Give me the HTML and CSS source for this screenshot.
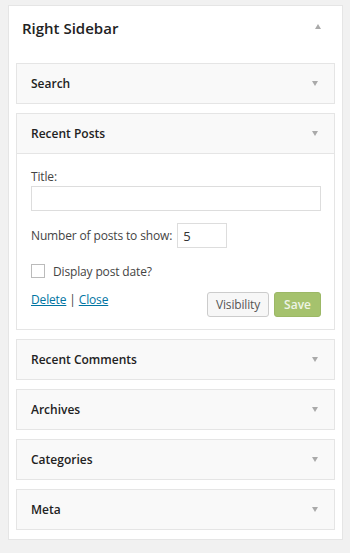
FILE: index.html
```html
<!DOCTYPE html>
<html lang="en">

<head>
    <meta charset="UTF-8">
    <meta name="viewport" content="width=device-width, initial-scale=1.0">
    <title>Right Sidebar</title>
    <link rel="stylesheet" href="styles.css">
</head>

<body>
    <div class="sidebar">
        <div class="sidebar-head">
            <h2 class="sidebar-name">Right Sidebar</h2>
            <span class="arrow arrow-up"></span>
        </div>

        <div class="widget">
            <div class="widget-top">
                <h3 class="widget-title">Search</h3>
                <span class="arrow"></span>
            </div>
        </div>

        <div class="widget open">
            <div class="widget-top">
                <h3 class="widget-title">Recent Posts</h3>
                <span class="arrow"></span>
            </div>
            <div class="widget-inside">
                <label class="field-label" for="title">Title:</label>
                <input class="text-input" id="title" type="text">

                <div class="number-row">
                    <label for="number">Number of posts to show:</label>
                    <input class="number-input" id="number" type="text" value="5">
                </div>

                <label class="check-row">
                    <span class="checkbox"></span>
                    Display post date?
                </label>

                <div class="actions">
                    <div class="links">
                        <a href="#">Delete</a> | <a href="#">Close</a>
                    </div>
                    <button class="button">Visibility</button>
                    <button class="button button-save">Save</button>
                </div>
            </div>
        </div>

        <div class="widget">
            <div class="widget-top">
                <h3 class="widget-title">Recent Comments</h3>
                <span class="arrow"></span>
            </div>
        </div>

        <div class="widget">
            <div class="widget-top">
                <h3 class="widget-title">Archives</h3>
                <span class="arrow"></span>
            </div>
        </div>

        <div class="widget">
            <div class="widget-top">
                <h3 class="widget-title">Categories</h3>
                <span class="arrow"></span>
            </div>
        </div>

        <div class="widget">
            <div class="widget-top">
                <h3 class="widget-title">Meta</h3>
                <span class="arrow"></span>
            </div>
        </div>
    </div>
</body>

</html>
```

FILE: styles.css
```css
body {
    margin: 0;
    padding: 5px 0 0 8px;
    background-color: #f1f1f1;
    font-family: "Open Sans", "Liberation Sans", sans-serif;
    font-size: 12px;
    letter-spacing: -0.15px;
    color: #444;
}

.sidebar {
    box-sizing: border-box;
    width: 335px;
    padding: 0 7px 0 7px;
    background-color: #fff;
    border: 1px solid #e5e5e5;
}

.sidebar-head {
    height: 57px;
    box-sizing: border-box;
    display: flex;
    align-items: flex-start;
    justify-content: space-between;
    padding: 12px 14px 0 6px;
}

.sidebar-name {
    margin: 0;
    font-size: 15px;
    line-height: 20px;
    font-weight: 600;
    letter-spacing: 0;
    color: #222;
}

.arrow {
    width: 0;
    height: 0;
    margin-right: 2px;
    border-left: 3.5px solid transparent;
    border-right: 3.5px solid transparent;
    border-top: 5px solid #aaa;
}

.arrow-up {
    margin: 6px 0 0 0;
    border-top: none;
    border-bottom: 5px solid #aaa;
}

.widget {
    margin-bottom: 9px;
    border: 1px solid #e5e5e5;
    background-color: #f9f9f9;
}

.widget-top {
    height: 39px;
    display: flex;
    align-items: center;
    justify-content: space-between;
    padding: 0 14px 0 14px;
}

.widget-title {
    margin: 0;
    font-size: 12px;
    font-weight: 600;
    letter-spacing: 0;
    color: #222;
}

.open .widget-top {
    border-bottom: 1px solid #e5e5e5;
}

.widget-inside {
    display: flex;
    flex-direction: column;
    padding: 14px 13px 12px 14px;
    background-color: #fff;
}

.field-label {
    line-height: 18px;
}

.text-input,
.number-input {
    box-sizing: border-box;
    height: 25px;
    margin: 0;
    border: 1px solid #ddd;
    font-family: inherit;
    font-size: 13px;
    color: #333;
}

.text-input {
    width: 290px;
}

.number-row {
    display: flex;
    align-items: center;
    margin-top: 12px;
}

.number-input {
    width: 50px;
    margin-left: 5px;
    padding: 0 5px;
}

.check-row {
    display: flex;
    align-items: center;
    height: 20px;
    margin-top: 13px;
}

.checkbox {
    box-sizing: border-box;
    width: 14px;
    height: 14px;
    margin-right: 8px;
    border: 1px solid #bbb;
}

.actions {
    display: flex;
    align-items: flex-start;
    margin-top: 11px;
}

.links {
    flex: 1;
    margin-top: -1px;
    line-height: 18px;
}

.links a {
    color: #0074a2;
}

.button {
    box-sizing: border-box;
    height: 25px;
    padding: 0 8px;
    border: 1px solid #ccc;
    border-radius: 3px;
    background-color: #f7f7f7;
    font-family: inherit;
    font-size: 12px;
    letter-spacing: -0.15px;
    color: #555;
}

.button-save {
    margin-left: 5px;
    padding: 0 9px;
    border-color: #9cb866;
    background-color: #a5c26d;
    font-weight: 600;
    letter-spacing: 0;
    color: #eef4e4;
}
```
